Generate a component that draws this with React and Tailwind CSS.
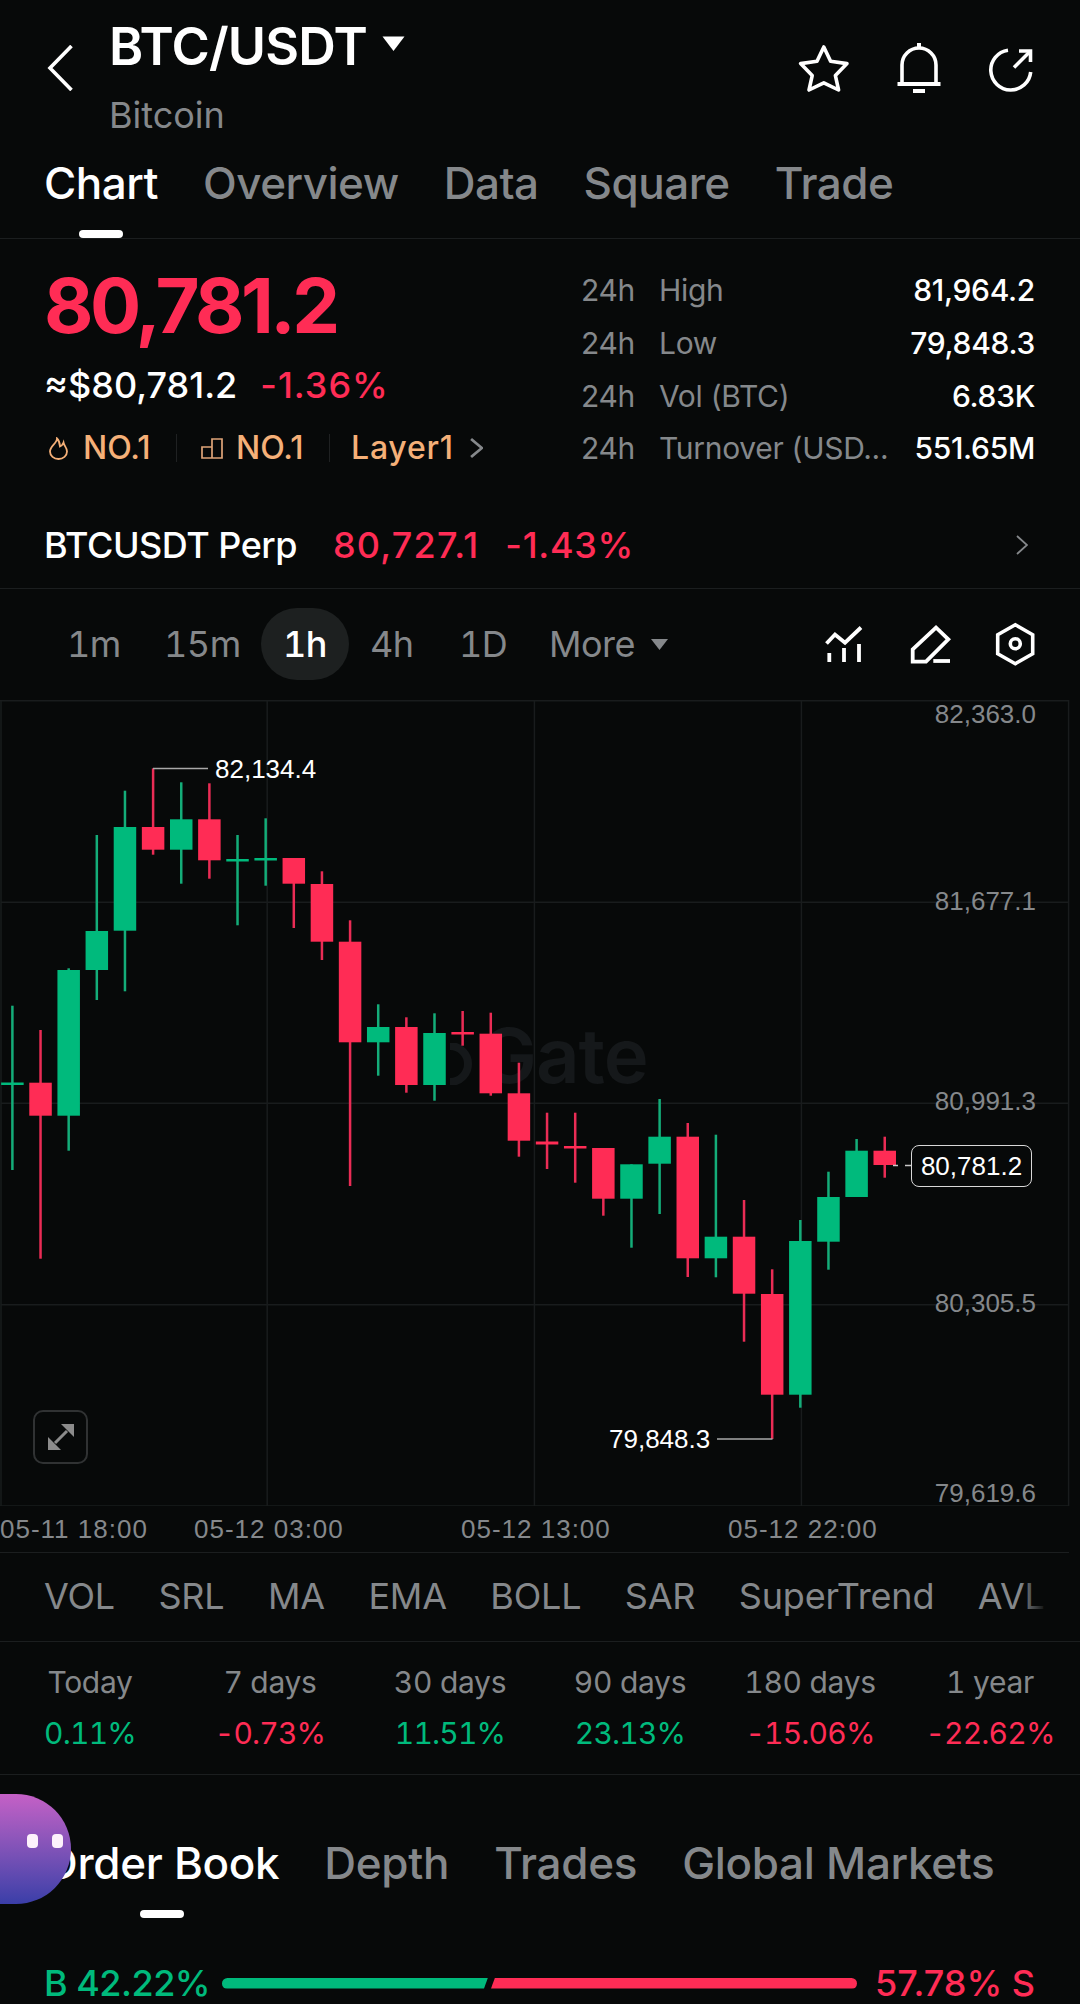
import React from "react";

const RED = "#ff2c55";
const GREEN = "#00ba7c";
const RW = "#ea2c55";
const GW = "#14ad79";

// color, wick top, body top, body bottom, wick bottom (page coordinates)
const candles = [
  ["g", 1005.7, 1082.5, 1085, 1170],
  ["r", 1030, 1082.7, 1115.7, 1258.7],
  ["g", 968.3, 970, 1115.7, 1150.7],
  ["g", 835, 931, 970, 1000],
  ["g", 790.7, 827, 930.7, 991.3],
  ["r", 768.3, 827, 849.7, 854.7],
  ["g", 782.3, 819.3, 849.7, 883.7],
  ["r", 783.3, 819.3, 860.3, 878.7],
  ["g", 835, 859, 861.5, 925.3],
  ["g", 818.3, 858, 860.5, 885.7],
  ["r", 858, 858, 883.7, 928],
  ["r", 871.3, 884, 941.7, 960],
  ["r", 920.3, 941.7, 1042.3, 1186],
  ["g", 1004.3, 1027, 1042.3, 1075.7],
  ["r", 1017.3, 1027, 1085, 1092.7],
  ["g", 1013.3, 1033, 1085, 1100.7],
  ["r", 1011, 1032, 1034.5, 1045.7],
  ["r", 1012.7, 1033.7, 1093.3, 1095.7],
  ["r", 1062.7, 1093.3, 1140.7, 1156.7],
  ["r", 1112.7, 1141.5, 1144.5, 1169],
  ["r", 1112.7, 1146, 1148.5, 1182.7],
  ["r", 1148, 1148, 1198.7, 1215.7],
  ["g", 1164.3, 1164.3, 1198.7, 1247.7],
  ["g", 1099, 1136.7, 1163.7, 1214],
  ["r", 1123, 1136.7, 1258.3, 1277],
  ["g", 1134.7, 1236.7, 1258.3, 1277.3],
  ["r", 1200, 1236.7, 1293.7, 1341.7],
  ["r", 1269.3, 1294, 1394.7, 1439],
  ["g", 1220, 1241, 1394.7, 1407.7],
  ["g", 1171.7, 1197, 1241.7, 1269.7],
  ["g", 1139, 1150.7, 1197, 1197],
  ["r", 1136.7, 1150.7, 1165, 1177.7],
];

function Chart() {
  return (
    <svg className="absolute inset-0 w-full h-full" viewBox="0 700 1080 806" fill="none">
      {[902.3, 1103.3, 1304.7].map((y) => (
        <line key={y} x1="1" x2="1069" y1={y} y2={y} stroke="#191c1d" strokeWidth="1.5" />
      ))}
      {[1, 267.2, 534.4, 801.4, 1068.6].map((x) => (
        <line key={x} x1={x} x2={x} y1="700" y2="1506" stroke="#191c1d" strokeWidth="1.5" />
      ))}
      <line x1="0" x2="1069" y1="700.7" y2="700.7" stroke="#191c1d" strokeWidth="1.5" />
      <line x1="0" x2="1069" y1="1506" y2="1506" stroke="#191c1d" strokeWidth="1.5" />
      {candles.map(([c, wt, bt, bb, wb], i) => {
        const x = 12.4 + i * 28.14;
        return (
          <g key={i}>
            <rect x={x - 1.25} y={wt} width="2.5" height={wb - wt} fill={c === "r" ? RW : GW} />
            <rect x={x - 11.25} y={bt} width="22.5" height={bb - bt} fill={c === "r" ? RED : GREEN} />
          </g>
        );
      })}
      <path d="M153 768.5H208" stroke="#a8a8a8" strokeWidth="1.5" />
      <path d="M717 1439H772.5" stroke="#a8a8a8" strokeWidth="1.5" />
      <path d="M893 1165.5H898M905 1165.5H911" stroke="#c8c8c8" strokeWidth="1.5" />
    </svg>
  );
}

function AxisLabel({ className, children }) {
  return (
    <div className={"absolute right-[44px] font-['Liberation_Sans',sans-serif] text-[26px] leading-[30px] text-[#85888b] " + className}>
      {children}
    </div>
  );
}

function Chevron({ className, sw = 2.5, color = "#ffffff" }) {
  return (
    <svg className={className} viewBox="0 0 12 20" fill="none" preserveAspectRatio="none">
      <path d="M1 1L11 10L1 19" stroke={color} strokeWidth={sw} />
    </svg>
  );
}

function Row({ label, value }) {
  return (
    <div className="flex items-center h-[52.67px] leading-[40px]">
      <span className="w-[78px] text-[#85888b]">24h</span>
      <span className="flex-1 text-[#85888b] whitespace-nowrap">{label}</span>
      <span className="text-white font-medium">{value}</span>
    </div>
  );
}

export default function App() {
  return (
    <div className="relative w-[1080px] h-[2004px] overflow-hidden bg-[#070909] text-white font-['Inter','Liberation_Sans',sans-serif]">
      {/* header */}
      <div className="relative flex h-[150px]">
        <svg className="mt-[45px] ml-[47px] w-[26px] h-[46px]" viewBox="0 0 26 46" fill="none">
          <path d="M24.5 1L3 23L24.5 45" stroke="#fff" strokeWidth="3.6" />
        </svg>
        <div className="ml-[36px] mt-[17px] flex flex-col">
          <div className="flex items-center">
            <span className="text-[52px] leading-[60px] font-semibold tracking-[-0.8px]">BTC/USDT</span>
            <svg className="ml-[15px] mb-[8px] w-[23px] h-[15px]" viewBox="0 0 23 15"><path d="M0.5 0.5H22.5L11.5 15Z" fill="#fff" /></svg>
          </div>
          <span className="mt-[16px] text-[36px] leading-[44px] text-[#85888b]">Bitcoin</span>
        </div>
        <div className="ml-auto mr-[47px] mt-[43px] flex gap-[48px] items-start">
          <svg className="mt-[2px] w-[50px] h-[47px] overflow-visible" viewBox="0 0 50 47" fill="none">
            <path d="M24.8 2L31.6 16.2L48 18.6L36.4 30.6L39.6 45L24.8 37.8L10 45L13.2 30.6L1.6 18.6L18 16.2Z" stroke="#fff" strokeWidth="3.6" strokeLinejoin="round" />
          </svg>
          <svg className="w-[44px] h-[51px] overflow-visible" viewBox="0 0 44 51" fill="none" stroke="#fff">
            <path d="M5 40V22a17 17 0 0 1 34 0V40" strokeWidth="3.6" />
            <path d="M0.5 41H43.5" strokeWidth="4" />
            <path d="M16 48H28" strokeWidth="4" />
            <path d="M22 0V6" strokeWidth="4" />
          </svg>
          <svg className="mt-[5px] w-[44px] h-[44px] overflow-visible" viewBox="0 0 44 44" fill="none" stroke="#fff" strokeWidth="3.6">
            <path d="M19 2.2A20 20 0 1 0 41.7 24" />
            <path d="M25 19.5L41.5 3" />
            <path d="M30 3H41.5V14" />
          </svg>
        </div>
      </div>

      {/* tabs */}
      <div className="flex h-[89px] pl-[44px] gap-[45px] border-b border-[#1b1e1f] text-[44px] leading-[66px] text-[#85888b] font-medium tracking-[-0.5px]">
        <div className="flex flex-col items-center text-white">
          <span>Chart</span>
          <div className="mt-[14px] w-[44px] h-[8px] rounded-full bg-white" />
        </div>
        <span>Overview</span>
        <span>Data</span>
        <span>Square</span>
        <span>Trade</span>
      </div>

      {/* price block */}
      <div className="flex h-[264px]">
        <div className="w-[537px] pl-[44px] pt-[28px]">
          <div className="text-[76px] leading-[76px] font-bold tracking-[-3.5px]" style={{ color: RED }}>80,781.2</div>
          <div className="mt-[22px] flex text-[36px] leading-[40px] font-medium gap-[23px]">
            <span>≈$80,781.2</span>
            <span className="tracking-[1px]" style={{ color: RED }}>-1.36%</span>
          </div>
          <div className="mt-[23px] flex items-center text-[32px] leading-[40px] font-medium text-[#f5b078]">
            <svg className="ml-[4px] w-[21px] h-[23px]" viewBox="0 0 21 23" fill="none">
              <path d="M9 1.5C9 6.5 2 9 2 14.5A8.5 7.5 0 0 0 19 14.5C19 10.5 16.3 9.5 15.5 5.5C14.5 8 13.5 9 12 9.5C11.8 6.5 11 3.5 9 1.5Z" stroke="#f5b078" strokeWidth="1.8" />
            </svg>
            <span className="ml-[14px] w-[68px]">NO.1</span>
            <div className="ml-[25px] w-[1px] h-[28px] bg-[#1f2122]" />
            <svg className="ml-[24px] w-[22px] h-[21px]" viewBox="0 0 22 21" fill="none" stroke="#dfa478" strokeWidth="1.7">
              <path d="M1 20V9H11V20ZM11 20V1H21V20Z" />
            </svg>
            <span className="ml-[13px] w-[68px]">NO.1</span>
            <div className="ml-[25px] w-[1px] h-[28px] bg-[#1f2122]" />
            <span className="ml-[21px] w-[119px] tracking-[0.8px]">Layer1</span>
            <Chevron className="w-[13px] h-[20px]" color="#85888b" />
          </div>
        </div>
        <div className="w-[454px] ml-[44px] pt-[25px] text-[30px] leading-[40px] tracking-[-0.3px]">
          <Row label="High" value="81,964.2" />
          <Row label="Low" value="79,848.3" />
          <Row label="Vol (BTC)" value="6.83K" />
          <Row label="Turnover (USD..." value="551.65M" />
        </div>
      </div>

      {/* perp */}
      <div className="flex items-center h-[86px] pb-[2px] pl-[44px] pr-[52px] border-b border-[#1b1e1f] text-[36px] font-medium">
        <span className="tracking-[-0.5px]">BTCUSDT Perp</span>
        <span className="ml-[36px] tracking-[1.2px]" style={{ color: RED }}>80,727.1</span>
        <span className="ml-[26px] tracking-[0.7px]" style={{ color: RED }}>-1.43%</span>
        <Chevron className="ml-auto w-[12px] h-[20px]" sw={1.8} color="#85888b" />
      </div>

      {/* time row */}
      <div className="flex items-center h-[111px] pb-[1px] pl-[67px] pr-[46px] text-[36px] text-[#85888b] tabular-nums tracking-[-0.5px]">
        <span className="w-[97px]">1m</span>
        <span className="w-[97px]">15m</span>
        <div className="w-[88px] h-[72px] rounded-full bg-[#1d2020] flex items-center justify-center text-white font-medium">1h</div>
        <span className="ml-[21px] w-[89px]">4h</span>
        <span className="w-[90px]">1D</span>
        <span className="w-[102px]">More</span>
        <svg className="w-[17px] h-[11px]" viewBox="0 0 17 11"><path d="M0 0H17L8.5 11Z" fill="#85888b" /></svg>
        <svg className="ml-auto w-[36px] h-[36px] overflow-visible" viewBox="0 0 36 36" fill="none" stroke="#fff" strokeWidth="3.8">
          <path d="M0.5 17.5L9 8.5L19 16.7L35 1.5" />
          <path d="M3.3 27V36M18 22V36M33 18V36" />
        </svg>
        <svg className="ml-[49px] w-[40px] h-[37px] overflow-visible" viewBox="0 0 40 37" fill="none" stroke="#fff" strokeWidth="3.8">
          <path d="M1.7 23.3L25 1.5L37.3 13.3L15 35.7H1.7Z" />
          <path d="M22.3 35H39" />
        </svg>
        <svg className="ml-[45px] w-[38px] h-[42px] overflow-visible" viewBox="0 0 38 42" fill="none" stroke="#fff" strokeWidth="3.6">
          <path d="M19.3 1.7L36.7 11.7V30.7L19.3 40.7L1.7 30.7V11.7Z" />
          <circle cx="19.3" cy="20.7" r="5" />
        </svg>
      </div>

      {/* chart */}
      <div className="relative h-[806px]">
        <svg className="absolute left-[445px] top-[343px] w-[30px] h-[42px]" viewBox="0 0 30 42" fill="none">
          <path d="M5 3A18 18 0 1 1 5 39" stroke="#15181a" strokeWidth="8" />
        </svg>
        <span className="absolute left-[480px] top-[317px] text-[76px] leading-[76px] font-semibold tracking-[-1px] text-[#15181a]">Gate</span>
        <Chart />
        <div className="absolute left-[215px] top-[54px] font-['Liberation_Sans',sans-serif] text-[26px] leading-[30px] text-white">82,134.4</div>
        <div className="absolute left-[609px] top-[724px] font-['Liberation_Sans',sans-serif] text-[26px] leading-[30px] text-white">79,848.3</div>
        <div className="absolute left-[911px] top-[445px] w-[121px] h-[42px] rounded-[8px] border-[1.5px] border-[#d8d8d8] bg-[#070909] flex items-center justify-center font-['Liberation_Sans',sans-serif] text-[26px] text-white">80,781.2</div>
        <AxisLabel className="-top-[1px]">82,363.0</AxisLabel>
        <AxisLabel className="top-[186px]">81,677.1</AxisLabel>
        <AxisLabel className="top-[386px]">80,991.3</AxisLabel>
        <AxisLabel className="top-[588px]">80,305.5</AxisLabel>
        <AxisLabel className="top-[778px]">79,619.6</AxisLabel>
        <div className="absolute left-[33px] top-[710px] w-[55px] h-[54px] rounded-[10px] border-2 border-[#303233] flex items-center justify-center">
          <svg className="w-[26px] h-[26px]" viewBox="0 0 26 26" fill="#8b8b8b">
            <path d="M26 0V13L13 0Z" />
            <path d="M0 26V13L13 26Z" />
            <path d="M7 19L19 7" stroke="#8b8b8b" strokeWidth="3" />
          </svg>
        </div>
      </div>

      {/* time axis */}
      <div className="flex items-center h-[47px] pt-[1px] border-b border-[#1b1e1f] w-[1069px] font-['Liberation_Sans',sans-serif] text-[26px] tracking-[1px] text-[#85888b] whitespace-nowrap">
        <span className="w-[147px]">05-11 18:00</span>
        <span className="ml-[47px] w-[147px]">05-12 03:00</span>
        <span className="ml-[120px] w-[147px]">05-12 13:00</span>
        <span className="ml-[120px] w-[147px]">05-12 22:00</span>
      </div>

      {/* indicators */}
      <div className="relative flex items-center h-[89px] pb-[3px] pl-[44px] gap-[43.5px] border-b border-[#1b1e1f] text-[36px] text-[#85888b] whitespace-nowrap tracking-[-0.2px]">
        <span>VOL</span>
        <span>SRL</span>
        <span>MA</span>
        <span>EMA</span>
        <span>BOLL</span>
        <span>SAR</span>
        <span>SuperTrend</span>
        <span>AVL</span>
        <div className="absolute left-[1020px] top-0 w-[60px] h-[87px] bg-gradient-to-r from-transparent to-[#070909] to-45%" />
      </div>

      {/* periods */}
      <div className="grid grid-cols-6 h-[133px] pt-[20px] border-b border-[#1b1e1f] text-center text-[30px] leading-[40px] tracking-[-0.3px] tabular-nums">
        {[
          ["Today", "0.11%", GREEN],
          ["7 days", "-0.73%", RED],
          ["30 days", "11.51%", GREEN],
          ["90 days", "23.13%", GREEN],
          ["180 days", "-15.06%", RED],
          ["1 year", "-22.62%", RED],
        ].map(([a, b, c]) => (
          <div key={a} className="flex flex-col">
            <span className="text-[#85888b]">{a}</span>
            <span className="mt-[11px] tracking-[-0.8px]" style={{ color: c }}>{b}</span>
          </div>
        ))}
      </div>

      {/* order tabs */}
      <div className="flex h-[144px] pl-[44px] pt-[55px] gap-[45px] text-[44px] leading-[66px] font-medium tracking-[-0.3px] text-[#85888b] whitespace-nowrap">
        <div className="flex flex-col items-center text-white">
          <span>Order Book</span>
          <div className="mt-[14px] w-[44px] h-[8px] rounded-full bg-white" />
        </div>
        <span>Depth</span>
        <span>Trades</span>
        <span>Global Markets</span>
      </div>

      {/* ratio */}
      <div className="flex items-center h-[40px] mt-[44px] pl-[44px] text-[36px] font-medium">
        <span style={{ color: GREEN }} className="w-[178px] whitespace-nowrap tracking-[-0.5px]">B 42.22%</span>
        <div className="w-[266px] h-[11px] rounded-l-full bg-[#00ba7c] [clip-path:polygon(0_0,100%_0,98.5%_100%,0_100%)]" />
        <div className="ml-[3px] w-[366px] h-[11px] rounded-r-full bg-[#ff2c55] [clip-path:polygon(1.1%_0,100%_0,100%_100%,0_100%)]" />
        <span style={{ color: RED }} className="ml-auto mr-[45px] whitespace-nowrap">57.78% S</span>
      </div>

      {/* floating bubble */}
      <div className="absolute left-0 top-[1794px] w-[71px] h-[110px] rounded-r-[55px] bg-gradient-to-b from-[#c560c6] to-[#3a3ea8]">
        <div className="absolute left-[27px] top-[40px] w-[11px] h-[14px] rounded-[4px] bg-[#fdf2fb]" />
        <div className="absolute left-[52px] top-[40px] w-[11px] h-[14px] rounded-[4px] bg-[#fdf2fb]" />
      </div>
    </div>
  );
}
